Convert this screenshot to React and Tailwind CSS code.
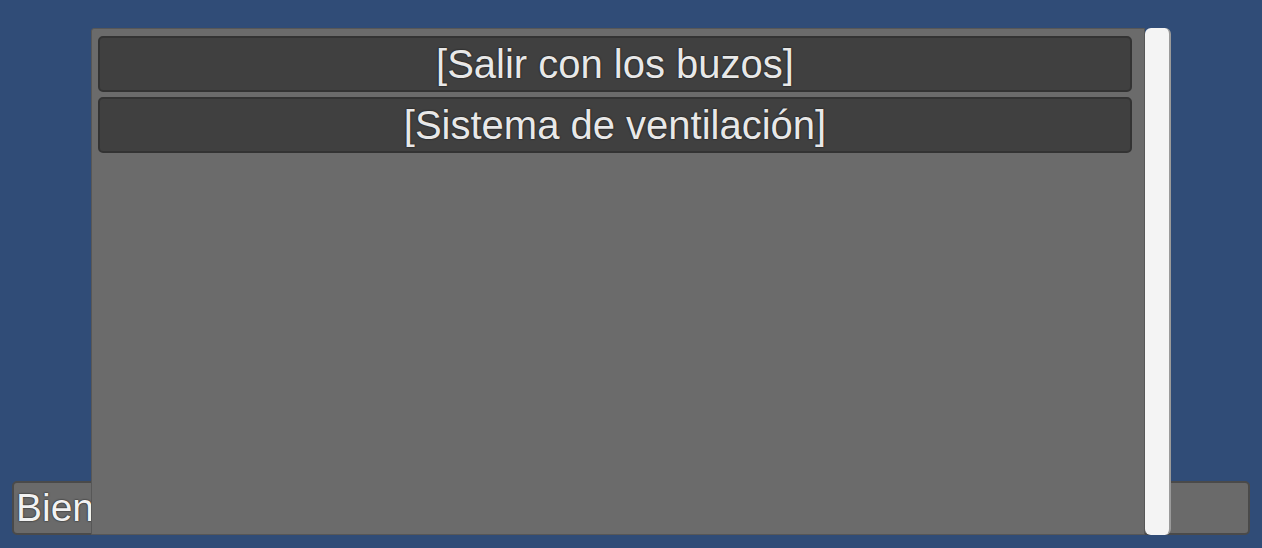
import React from 'react'

const items = ['[Salir con los buzos]', '[Sistema de ventilación]']

const App = () => {
    return (
        <div className="relative w-[1262px] h-[548px] bg-[#304c77] font-['Liberation_Sans',Arial,sans-serif] overflow-hidden">
            {/* input field */}
            <div className="flex flex-col justify-end h-full px-[12px] pb-[13px]">
                <div className="h-[54px] bg-[#6a6a6a] border-2 border-[#4a4a4a] rounded-[5px] flex items-center pl-[2px]">
                    <span className="text-[39px] text-[#f2f2f2] [text-shadow:0_0_2px_#222,0_0_1px_#222]">Bienvenido</span>
                </div>
            </div>

            {/* dropdown list */}
            <div className="absolute left-[91px] top-[28px] h-[507px] flex">
                <div className="w-[1054px] h-full bg-[#6b6b6b] border border-[#575757] rounded-tl-[3px] pl-[6px] pr-[12px] pt-[7px] flex flex-col gap-[5px]">
                    {items.map((item) => (
                        <button
                            key={item}
                            className="h-[56px] w-full bg-[#404040] border-2 border-[#333333] rounded-[5px] text-[40px] leading-none text-[#e8e8e8] [text-shadow:0_0_2px_#1a1a1a,0_0_1px_#1a1a1a]"
                        >
                            {item}
                        </button>
                    ))}
                </div>
                <div className="w-[26px] h-full bg-[#f4f4f4] border-r-2 border-[#9a9a9a] rounded-[6px]" />
            </div>
        </div>
    )
}

export default App
